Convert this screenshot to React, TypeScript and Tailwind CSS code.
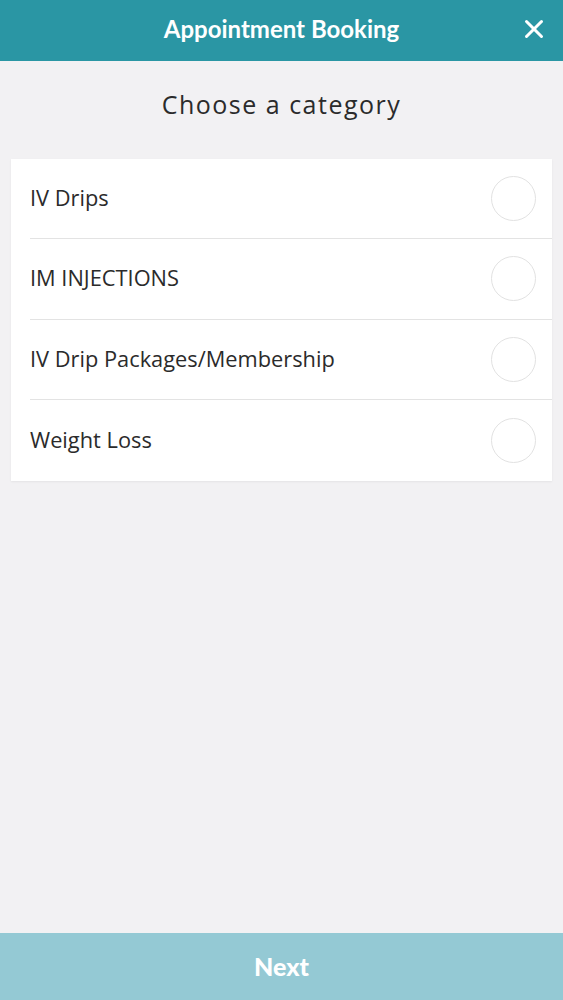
import { X } from "lucide-react"

const categories = ["IV Drips", "IM INJECTIONS", "IV Drip Packages/Membership", "Weight Loss"]

export default function App() {
    return (
        <div className="h-[1000px] flex flex-col bg-[#f2f1f3] font-['Open_Sans',sans-serif]">
            {/* Header */}
            <div className="relative h-[61px] shrink-0 flex items-center justify-center bg-[#2a96a4]">
                <h1 className="-mt-[3px] text-[24px] font-bold text-white font-['Lato',sans-serif]">
                    Appointment Booking
                </h1>
                <button aria-label="Close" className="absolute right-[14px] top-[14px] text-white">
                    <X size={30} strokeWidth={2.4} />
                </button>
            </div>

            <main className="flex-1 flex flex-col px-[11px]">
                <h2 className="mt-[25px] mb-[35px] text-center text-[25px] tracking-[1.5px] text-[#2b2b2b]">
                    Choose a category
                </h2>

                <div className="bg-white shadow-[0_1px_2px_rgba(0,0,0,0.06)]">
                    {categories.map((c, i) => (
                        <div
                            key={c}
                            className={
                                i < categories.length - 1
                                    ? "ml-[19px] h-[80.5px] flex items-center justify-between border-b border-[#e3e3e3]"
                                    : "ml-[19px] h-[80.5px] flex items-center justify-between"
                            }
                        >
                            <span className="text-[21.8px] text-[#2b2b2b]">{c}</span>
                            <span className="mr-[16px] w-[45px] h-[45px] rounded-full border border-[#e2e2e2]" />
                        </div>
                    ))}
                </div>
            </main>

            <button className="h-[67px] shrink-0 bg-[#94c9d4] text-white text-[25px] font-black font-['Lato',sans-serif]">
                Next
            </button>
        </div>
    )
}
